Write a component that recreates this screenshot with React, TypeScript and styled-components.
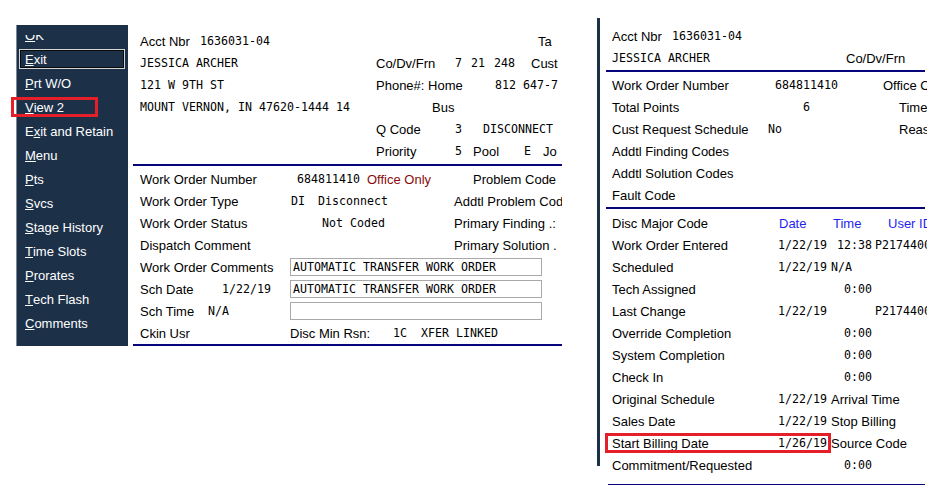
import React from "react";
import styled, { createGlobalStyle } from "styled-components";

type Field = {
  t?: string;
  w?: number;
  mono?: boolean;
  tone?: "red" | "blue";
  box?: boolean;
};

const menu: [string, number][] = [
  ["OK", 0],
  ["Exit", 0],
  ["Prt W/O", 0],
  ["View 2", 0],
  ["Exit and Retain", 1],
  ["Menu", 0],
  ["Pts", 0],
  ["Svcs", 0],
  ["Stage History", 0],
  ["Time Slots", 0],
  ["Prorates", 0],
  ["Tech Flash", 0],
  ["Comments", 0],
];

const leftTop: Field[][] = [
  [{ t: "Acct Nbr", w: 60 }, { t: "1636031-04", w: 338, mono: true }, { t: "Ta" }],
  [
    { t: "JESSICA ARCHER", w: 236, mono: true },
    { t: "Co/Dv/Frn", w: 79 },
    { t: "7", w: 16, mono: true },
    { t: "21", w: 23, mono: true },
    { t: "248", w: 37, mono: true },
    { t: "Cust ID" },
  ],
  [
    { t: "121 W 9TH ST", w: 236, mono: true },
    { t: "Phone#: Home", w: 119 },
    { t: "812 647-7", mono: true },
  ],
  [{ t: "MOUNT VERNON, IN 47620-1444 14", w: 292, mono: true }, { t: "Bus" }],
  [{ w: 236 }, { t: "Q Code", w: 79 }, { t: "3", w: 28, mono: true }, { t: "DISCONNECT", mono: true }],
  [
    { w: 236 },
    { t: "Priority", w: 79 },
    { t: "5", w: 18, mono: true },
    { t: "Pool", w: 51 },
    { t: "E", w: 19, mono: true },
    { t: "Jo" },
  ],
];

const leftBottom: Field[][] = [
  [
    { t: "Work Order Number", w: 157 },
    { t: "684811410", w: 70, mono: true },
    { t: "Office Only", w: 106, tone: "red" },
    { t: "Problem Code" },
  ],
  [
    { t: "Work Order Type", w: 151 },
    { t: "DI", w: 27, mono: true },
    { t: "Disconnect", w: 136, mono: true },
    { t: "Addtl Problem Code" },
  ],
  [{ t: "Work Order Status", w: 182 }, { t: "Not Coded", w: 132, mono: true }, { t: "Primary Finding .:" }],
  [{ t: "Dispatch Comment", w: 314 }, { t: "Primary Solution ." }],
  [{ t: "Work Order Comments", w: 150 }, { t: "AUTOMATIC TRANSFER WORK ORDER", box: true }],
  [{ t: "Sch Date", w: 82 }, { t: "1/22/19", w: 68, mono: true }, { t: "AUTOMATIC TRANSFER WORK ORDER", box: true }],
  [{ t: "Sch Time", w: 68 }, { t: "N/A", w: 82, mono: true }, { t: "", box: true }],
  [
    { t: "Ckin Usr", w: 150 },
    { t: "Disc Min Rsn:", w: 103 },
    { t: "1C", w: 28, mono: true },
    { t: "XFER LINKED", mono: true },
  ],
];

const rightTop: Field[][] = [
  [{ t: "Acct Nbr", w: 60 }, { t: "1636031-04", mono: true }],
  [{ t: "JESSICA ARCHER", w: 234, mono: true }, { t: "Co/Dv/Frn" }],
];

const rightMid: Field[][] = [
  [{ t: "Work Order Number", w: 163 }, { t: "684811410", w: 108, mono: true }, { t: "Office Only" }],
  [{ t: "Total Points", w: 191 }, { t: "6", w: 96, mono: true }, { t: "Time Slot" }],
  [{ t: "Cust Request Schedule", w: 156 }, { t: "No", w: 131, mono: true }, { t: "Reason" }],
  [{ t: "Addtl Finding Codes" }],
  [{ t: "Addtl Solution Codes" }],
  [{ t: "Fault Code" }],
];

const rightBottom: Field[][] = [
  [
    { t: "Disc Major Code", w: 167 },
    { t: "Date", w: 54, tone: "blue" },
    { t: "Time", w: 55, tone: "blue" },
    { t: "User ID", tone: "blue" },
  ],
  [
    { t: "Work Order Entered", w: 166 },
    { t: "1/22/19", w: 59, mono: true },
    { t: "12:38", w: 38, mono: true },
    { t: "P2174400", mono: true },
  ],
  [{ t: "Scheduled", w: 166 }, { t: "1/22/19", w: 53, mono: true }, { t: "N/A", mono: true }],
  [{ t: "Tech Assigned", w: 232 }, { t: "0:00", mono: true }],
  [{ t: "Last Change", w: 166 }, { t: "1/22/19", w: 97, mono: true }, { t: "P2174400", mono: true }],
  [{ t: "Override Completion", w: 232 }, { t: "0:00", mono: true }],
  [{ t: "System Completion", w: 232 }, { t: "0:00", mono: true }],
  [{ t: "Check In", w: 232 }, { t: "0:00", mono: true }],
  [{ t: "Original Schedule", w: 166 }, { t: "1/22/19", w: 53, mono: true }, { t: "Arrival Time" }],
  [{ t: "Sales Date", w: 166 }, { t: "1/22/19", w: 53, mono: true }, { t: "Stop Billing" }],
  [{ t: "Start Billing Date", w: 166 }, { t: "1/26/19", w: 53, mono: true }, { t: "Source Code" }],
  [{ t: "Commitment/Requested", w: 232 }, { t: "0:00", mono: true }],
];

const renderRows = (rows: Field[][]) =>
  rows.map((row, i) => (
    <Row key={i}>
      {row.map((f, j) =>
        f.box ? (
          <TextBox key={j}>{f.t}</TextBox>
        ) : (
          <Cell key={j} $w={f.w} $mono={f.mono} $tone={f.tone}>
            {f.t}
          </Cell>
        )
      )}
    </Row>
  ));

const App = () => {
  return (
    <Page>
      <GlobalStyle />
      <LeftShot>
        <Sidebar>
          <MenuClip>
            <MenuList>
              {menu.map(([label, k], i) => (
                <MenuItem key={label}>
                  <FocusBox $focused={i === 1}>
                    {label.slice(0, k)}
                    <u>{label[k]}</u>
                    {label.slice(k + 1)}
                  </FocusBox>
                </MenuItem>
              ))}
            </MenuList>
          </MenuClip>
        </Sidebar>
        <LeftPanel>
          {renderRows(leftTop)}
          <Divider $inset={5} $mt={2} $mb={2} />
          {renderRows(leftBottom)}
          <Divider $inset={5} $mt={0} $mb={0} />
        </LeftPanel>
        <Highlight $left={-5} $top={72} $w={87} />
      </LeftShot>
      <RightShot>
        <Bar />
        <RightPanel>
          {renderRows(rightTop)}
          <Divider $inset={6} $right={2} $mt={1} $mb={2} />
          {renderRows(rightMid)}
          <Divider $inset={6} $right={2} $mt={1} $mb={3} />
          {renderRows(rightBottom)}
          <BottomRule />
        </RightPanel>
        <Highlight $left={8} $top={415} $w={226} />
      </RightShot>
    </Page>
  );
};

export default App;

const GlobalStyle = createGlobalStyle`
  html, body {
    margin: 0;
    padding: 0;
    background: #ffffff;
  }
  body {
    font-family: "Liberation Sans", Arial, sans-serif;
    font-size: 13px;
    color: #000000;
  }
`;

const Page = styled.div`
  width: 947px;
  height: 502px;
  overflow: hidden;
  display: flex;
  align-items: flex-start;
  background: #ffffff;
`;

const LeftShot = styled.div`
  position: relative;
  display: flex;
  margin: 25px 0 0 16px;
`;

const Sidebar = styled.div`
  width: 111px;
  border-left: 1px solid #7b8795;
  background: #1c3048;
  color: #ffffff;
`;

const MenuClip = styled.div`
  margin-top: 10px;
  overflow: hidden;
`;

const MenuList = styled.div`
  margin-top: -12px;
`;

const MenuItem = styled.div`
  height: 24px;
  display: flex;
  align-items: center;
  padding-left: 2px;
  white-space: nowrap;

  u {
    text-decoration-thickness: 1px;
    text-underline-offset: 1px;
  }
`;

const FocusBox = styled.span<{ $focused: boolean }>`
  box-sizing: border-box;
  display: flex;
  align-items: center;
  height: 20px;
  width: 106px;
  padding-left: 5px;
  border: 1px solid ${(p) => (p.$focused ? "#d6d6d6" : "transparent")};
  box-shadow: ${(p) => (p.$focused ? "inset 0 0 0 1px #0b0b0b" : "none")};
`;

const LeftPanel = styled.div`
  width: 434px;
  padding-top: 5px;
  background: #ffffff;
  overflow: hidden;
`;

const Row = styled.div`
  height: 22px;
  display: flex;
  align-items: center;
  padding-left: 12px;
  white-space: nowrap;
  overflow: hidden;
`;

const monoStack = `"DejaVu Sans Mono", "Liberation Mono", monospace`;

const Cell = styled.span<{ $w?: number; $mono?: boolean; $tone?: "red" | "blue" }>`
  flex: none;
  width: ${(p) => (p.$w ? `${p.$w}px` : "auto")};
  font-family: ${(p) => (p.$mono ? monoStack : `"Liberation Sans", Arial, sans-serif`)};
  font-size: ${(p) => (p.$mono ? "11.6px" : "13px")};
  letter-spacing: ${(p) => (p.$mono ? "0.02px" : "normal")};
  color: ${(p) => (p.$tone === "red" ? "#8a0a0a" : p.$tone === "blue" ? "#1f1ff0" : "#000000")};
`;

const TextBox = styled.div`
  box-sizing: border-box;
  flex: none;
  width: 252px;
  height: 18px;
  padding-left: 2px;
  border: 1px solid #a9a9a9;
  display: flex;
  align-items: center;
  font-family: ${monoStack};
  font-size: 11.6px;
  letter-spacing: 0.02px;
`;

const Divider = styled.div<{ $inset: number; $right?: number; $mt: number; $mb: number }>`
  height: 2px;
  margin: ${(p) => p.$mt}px ${(p) => p.$right ?? 0}px ${(p) => p.$mb}px ${(p) => p.$inset}px;
  background: #06067a;
`;

const BottomRule = styled.div`
  height: 1px;
  margin: 8px 2px 0 8px;
  background: #06067a;
`;

const RightShot = styled.div`
  position: relative;
  display: flex;
  align-items: flex-start;
  margin: 18px 0 0 35px;
`;

const Bar = styled.div`
  width: 3px;
  height: 448px;
  background: #1c3048;
`;

const RightPanel = styled.div`
  width: 327px;
  padding-top: 7px;
  overflow: hidden;
`;

const Highlight = styled.div<{ $left: number; $top: number; $w: number }>`
  position: absolute;
  box-sizing: border-box;
  left: ${(p) => p.$left}px;
  top: ${(p) => p.$top}px;
  width: ${(p) => p.$w}px;
  height: 20px;
  border: 3px solid #e41f2a;
  pointer-events: none;
`;
